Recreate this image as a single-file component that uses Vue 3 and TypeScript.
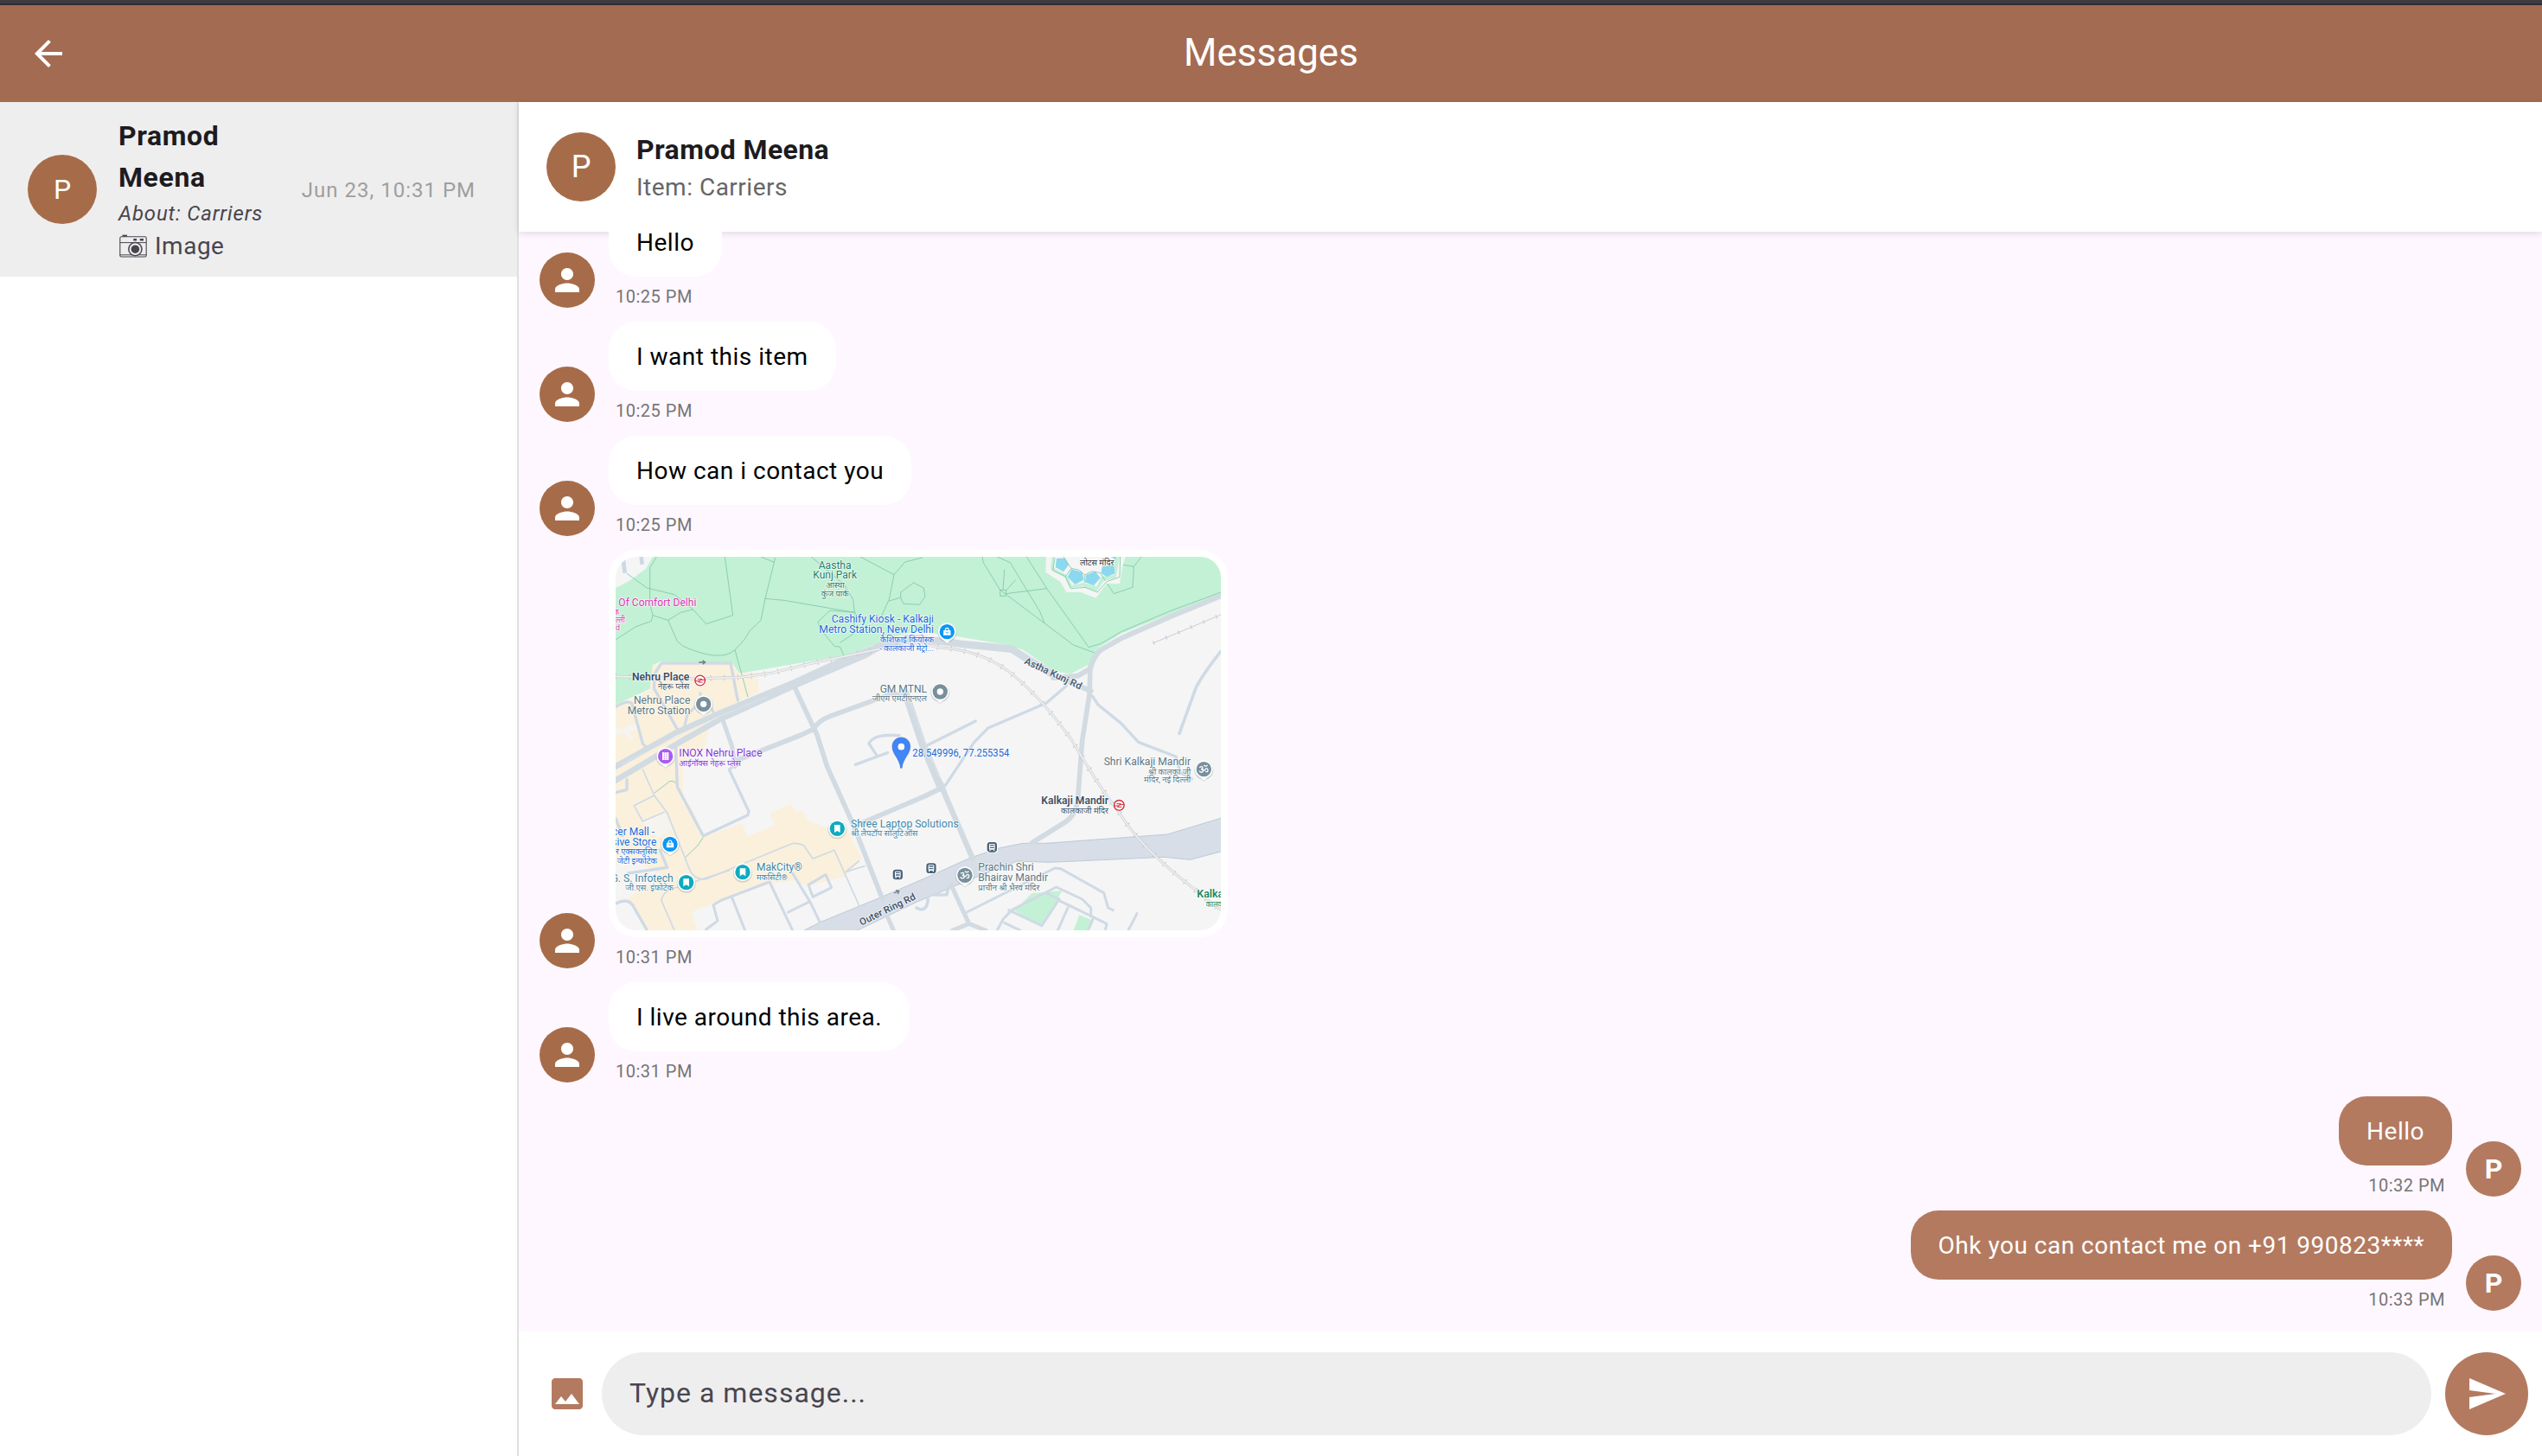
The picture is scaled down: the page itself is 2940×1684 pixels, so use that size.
<script setup lang="ts">
interface Message {
  id: number
  kind: 'text' | 'map'
  text?: string
  time: string
  mine: boolean
}

const messages: Message[] = [
  { id: 1, kind: 'text', text: 'Hello', time: '10:25 PM', mine: false },
  { id: 2, kind: 'text', text: 'I want this item', time: '10:25 PM', mine: false },
  { id: 3, kind: 'text', text: 'How can i contact you', time: '10:25 PM', mine: false },
  { id: 4, kind: 'map', time: '10:31 PM', mine: false },
  { id: 5, kind: 'text', text: 'I live around this area.', time: '10:31 PM', mine: false },
  { id: 6, kind: 'text', text: 'Hello', time: '10:32 PM', mine: true },
  { id: 7, kind: 'text', text: 'Ohk you can contact me on +91 990823****', time: '10:33 PM', mine: true },
]

interface Road { d: string; w: number; c?: string }

const roads: Road[] = [
  { w: 5, d: 'M130 780L170 870L215 930L290 1120Q305 1165 350 1160L640 1040Q665 1030 690 1045L720 1090L795 1060L880 1250' },
  { w: 5, d: 'M170 870L100 905L130 960L205 928' },
  { w: 5, d: 'M240 1338L195 1235Q200 1205 230 1195L430 1130M835 1135L900 1115M840 1130L880 1098' },
  { w: 10, d: 'M36 860L75 850L75 815M36 950L60 1010M80 1140L215 1120L190 1060' },
  { w: 10, d: 'M250 640L170 500L170 450L195 411L435 411L460 540' },
  { w: 9, d: 'M275 630L285 590L330 545M330 545L330 515M365 560L375 580' },
  { w: 10, d: 'M36 562Q90 530 95 560L130 690L150 712' },
  { w: 10, d: 'M36 1245Q75 1225 95 1250L145 1338' },
  { w: 10, d: 'M450 765L430 780L498 925L495 938L340 1010L250 840L245 700' },
  { w: 9, d: 'M350 1335L390 1305L375 1250L400 1235L570 1170L650 1338M440 1225L485 1338' },
  { w: 9, d: 'M635 1275L710 1238L745 1310M650 1140L710 1238M705 1180L765 1145L785 1190L720 1222Z' },
  { w: 10, d: 'M868 763L980 722M940 728L915 690Q930 655 1020 662' },
  { w: 10, d: 'M1600 490L1530 550L1330 635L1280 685L1180 835' },
  { w: 10, d: 'M1690 525L1710 555L1790 620L1850 685L1980 735L1995 790L2035 812' },
  { w: 11, d: 'M2136 370Q2080 440 2050 495L1992 655' },
  { w: 10, d: 'M1285 612L1110 700' },
  { w: 9, d: 'M1255 1275L1560 1122L1580 1124L1730 1208L1745 1260L1762 1268' },
  { w: 9, d: 'M1360 1338L1380 1300L1410 1268L1565 1188L1655 1230L1685 1260L1685 1290' },
  { w: 9, d: 'M1400 1268L1515 1322L1575 1230L1528 1208M1575 1235L1740 1315L1735 1338M1605 1260L1570 1338M1695 1292L1675 1338M1845 1280L1815 1338' },
  { w: 9, d: 'M1385 1312L1440 1338' },
  { w: 11, d: 'M1080 1260Q1115 1280 1120 1230M1140 1215L1185 1215L1190 1190' },
  { w: 15, d: 'M1200 1180L1262 1315L1320 1338M1262 1315L1205 1338' },
  { w: 15, d: 'M975 1280L1000 1338' },
  { w: 15, d: 'M405 600L440 700L450 770' },
  { w: 17, d: 'M440 755L680 660L722 640Q740 610 780 595L1000 515L1035 530' },
  { w: 17, d: 'M655 490L735 660L770 770L860 970L962 1230' },
  { w: 17, d: 'M885 968L1110 872L1165 845' },
  { w: 26, d: 'M1040 510L1100 690L1165 845' },
  { w: 19, d: 'M1165 830L1180 870L1275 1090' },
  { w: 20, d: 'M36 770L240 655L400 583L650 480L850 388L960 350' },
  { w: 20, d: 'M36 818L250 690L400 605L650 492L900 385L960 350' },
  { w: 26, d: 'M940 358Q1010 325 1080 325L1240 345L1410 362L1470 400L1560 455' },
  { w: 18, d: 'M1550 450L1685 508M1555 462L1640 455L1683 430Q1695 385 1720 365L1790 325L1960 250L2136 178' },
  { w: 17, d: 'M1683 420L1680 520L1655 680L1640 880Q1635 935 1600 960L1480 1035' },
]

const rails: string[] = [
  'M36 457L300 465L470 460L580 445L700 415L960 360Q1080 335 1160 357Q1300 365 1400 440Q1510 525 1620 680Q1720 850 1780 925Q1850 1040 2000 1160L2136 1268',
]

const paths: string[] = [
  'M75 100L145 150L240 173L305 225L350 275L443 245L415 42',
  'M305 225L262 235L218 262L165 245L155 205L155 80L178 42M165 245L160 265L105 285L36 330',
  'M218 262L250 335L270 352Q400 410 450 365Q490 325 500 300L540 262L555 187L590 45M540 42L588 62',
  'M450 365L495 528M555 187L620 193L865 235L860 190L830 140L715 42M865 235L780 228L738 268L745 290L795 352L815 355L828 385M815 340L860 310L868 235',
  'M885 42L1002 104L1040 60L1100 45M1002 104L985 190L955 255M985 195L1025 183L1025 165L1070 132L1105 150L1110 180L1090 208L1035 205L1025 183',
  'M1308 42L1312 62L1370 157L1625 348L1698 375M1360 42L1405 62L1508 232L1524 272M1462 42L1532 152L1658 328L1677 356L1720 343L1790 302L1960 230L2136 165',
  'M1370 157H1390V178H1370ZM1380 157L1385 85M1390 160L1424 122M1390 170L1532 152',
  'M170 862L225 820L240 822L250 835M278 1085L320 1045L340 1015',
  'M1735 125L1765 170L1830 148L1834 76L1860 42M1770 65L1834 76',
]

interface Label {
  t: string; x: number; y: number; s: number; w: number; c: string; a?: 'end' | 'middle'; b?: boolean; r?: string
}

const GREEN = '#23806a'
const BLUE = '#1a6be0'
const SLATE = '#5b7683'
const DARK = '#3c4f63'
const TEAL = '#3d87a8'

const labels: Label[] = [
  { t: 'Aastha', x: 740, y: 84, s: 36, w: 114, c: GREEN },
  { t: 'Kunj Park', x: 721, y: 117, s: 36, w: 152, c: GREEN },
  { t: 'आस्था', x: 766, y: 149, s: 28, w: 64, c: GREEN },
  { t: 'कुंज पार्क', x: 749, y: 180, s: 28, w: 96, c: GREEN },
  { t: 'Of Comfort Delhi', x: 46, y: 213, s: 36, w: 270, c: '#e530b8' },
  { t: 'क', x: 30, y: 243, s: 28, w: 18, c: '#e530b8' },
  { t: 'ल्ली', x: 36, y: 270, s: 28, w: 32, c: '#e530b8' },
  { t: 'd', x: 36, y: 297, s: 28, w: 15, c: '#e530b8' },
  { t: 'Cashify Kiosk - Kalkaji', x: 785, y: 270, s: 36, w: 355, c: BLUE },
  { t: 'Metro Station, New Delhi', x: 742, y: 307, s: 36, w: 398, c: BLUE },
  { t: 'कैशिफाई कियोस्क', x: 954, y: 338, s: 28, w: 186, c: BLUE },
  { t: '- कालकाजी मेट्रो...', x: 952, y: 368, s: 28, w: 188, c: BLUE },
  { t: 'लोटस मंदिर', x: 1647, y: 71, s: 28, w: 118, c: '#2e3338' },
  { t: 'Nehru Place', x: 93, y: 470, s: 36, w: 199, c: DARK, b: true },
  { t: 'नेहरू प्लेस', x: 183, y: 500, s: 28, w: 109, c: DARK },
  { t: 'Nehru Place', x: 99, y: 553, s: 36, w: 196, c: SLATE },
  { t: 'Metro Station', x: 77, y: 589, s: 36, w: 218, c: SLATE },
  { t: 'GM MTNL', x: 953, y: 513, s: 36, w: 163, c: SLATE },
  { t: 'जीएम एमटीएनएल', x: 926, y: 543, s: 28, w: 190, c: SLATE },
  { t: 'Astha Kunj Rd', x: 1452, y: 412, s: 34, w: 215, c: '#4d6076', b: true, r: 'rotate(25 1452 412)' },
  { t: 'INOX Nehru Place', x: 256, y: 736, s: 36, w: 289, c: '#8437dc' },
  { t: 'आईनॉक्स नेहरू प्लेस', x: 256, y: 767, s: 28, w: 215, c: '#8437dc' },
  { t: '28.549996, 77.255354', x: 1066, y: 736, s: 36, w: 336, c: '#1967d2' },
  { t: 'Shri Kalkaji Mandir', x: 1730, y: 765, s: 36, w: 301, c: SLATE },
  { t: 'श्री कालका जी', x: 1884, y: 799, s: 28, w: 148, c: SLATE },
  { t: 'मंदिर, नई दिल्ली', x: 1869, y: 826, s: 28, w: 163, c: SLATE },
  { t: 'Kalkaji Mandir', x: 1513, y: 900, s: 36, w: 233, c: DARK, b: true },
  { t: 'कालकाजी मंदिर', x: 1581, y: 933, s: 28, w: 165, c: DARK },
  { t: 'Shree Laptop Solutions', x: 852, y: 980, s: 36, w: 374, c: TEAL },
  { t: 'श्री लैपटॉप सोलुटिओंस', x: 852, y: 1012, s: 28, w: 232, c: TEAL },
  { t: 'cer Mall -', x: 24, y: 1008, s: 36, w: 147, c: BLUE },
  { t: 'sive Store', x: 22, y: 1044, s: 36, w: 156, c: BLUE },
  { t: 'र एक्सक्लूसिव', x: 36, y: 1074, s: 28, w: 144, c: BLUE },
  { t: 'जेटी इन्फोटेक', x: 41, y: 1107, s: 28, w: 139, c: BLUE },
  { t: 'G. S. Infotech', x: 20, y: 1170, s: 36, w: 216, c: TEAL },
  { t: 'जी.एस. इंफोटेक', x: 70, y: 1199, s: 28, w: 167, c: TEAL },
  { t: 'MakCity®', x: 525, y: 1132, s: 36, w: 158, c: TEAL },
  { t: 'मकसिटी®', x: 525, y: 1165, s: 28, w: 107, c: TEAL },
  { t: 'Prachin Shri', x: 1294, y: 1132, s: 36, w: 193, c: SLATE },
  { t: 'Bhairav Mandir', x: 1294, y: 1168, s: 36, w: 242, c: SLATE },
  { t: 'प्राचीन श्री भैरव मंदिर', x: 1294, y: 1199, s: 28, w: 213, c: SLATE },
  { t: 'Outer Ring Rd', x: 889, y: 1322, s: 34, w: 212, c: '#47586d', b: true, r: 'rotate(-26 889 1322)' },
  { t: 'Kalkaji', x: 2053, y: 1223, s: 36, w: 112, c: '#1b8a5e', b: true },
  { t: 'कालका', x: 2084, y: 1258, s: 28, w: 68, c: '#1b8a5e' },
]

interface Pin { x: number; y: number; c: string; g: 'dot' | 'bag' | 'film' | 'mark' | 'om'; tail: boolean }

const pins: Pin[] = [
  { x: 341, y: 553, c: '#78909c', g: 'dot', tail: true },
  { x: 1186, y: 302, c: '#0a97f5', g: 'bag', tail: true },
  { x: 1162, y: 510, c: '#78909c', g: 'dot', tail: true },
  { x: 209, y: 734, c: '#ab5cf0', g: 'film', tail: true },
  { x: 225, y: 1039, c: '#0a97f5', g: 'bag', tail: true },
  { x: 281, y: 1172, c: '#0fabc0', g: 'mark', tail: false },
  { x: 477, y: 1136, c: '#0fabc0', g: 'mark', tail: false },
  { x: 805, y: 985, c: '#0fabc0', g: 'mark', tail: false },
  { x: 1248, y: 1147, c: '#78909c', g: 'om', tail: true },
  { x: 2077, y: 779, c: '#78909c', g: 'om', tail: true },
]

const metros = [{ x: 329, y: 471 }, { x: 1783, y: 904 }]
const stops = [{ x: 1015, y: 1144 }, { x: 1131, y: 1122 }, { x: 1342, y: 1049 }]
</script>

<template>
  <div class="app">
    <div class="edge"></div>
    <header class="bar">
      <svg class="back" viewBox="0 0 24 24"><path d="M20 11H7.83l5.59-5.59L12 4l-8 8 8 8 1.41-1.41L7.83 13H20v-2z" /></svg>
      <h1>Messages</h1>
    </header>

    <div class="body">
      <aside class="side">
        <div class="chat">
          <div class="avatar big small-letter">P</div>
          <div class="info">
            <div class="name">Pramod Meena</div>
            <div class="about">About: Carriers</div>
            <div class="last">
              <svg class="camera" viewBox="0 0 32 27" fill="none" stroke="#49454f">
                <rect x="0.8" y="2.8" width="30.4" height="23.2" rx="1.6" stroke-width="1.1" />
                <path d="M1 9.6H31M1 23.8H31" stroke-width="1" />
                <path d="M3.5 0.6h5.5v2h-5.5z" fill="#49454f" stroke="none" />
                <path d="M16.3 5h3.8v2.6h-3.8zM23.8 5h4.2v2.6h-4.2z" fill="#49454f" stroke="none" />
                <circle cx="18.4" cy="17.2" r="7.6" fill="#eee" stroke-width="1.5" />
                <circle cx="18.4" cy="17.2" r="4.8" fill="#49454f" stroke="none" />
              </svg>
              <span>Image</span>
            </div>
          </div>
          <div class="date">Jun 23, 10:31 PM</div>
        </div>
      </aside>

      <main class="main">
        <div class="head">
          <div class="avatar big">P</div>
          <div class="info">
            <div class="name">Pramod Meena</div>
            <div class="item">Item: Carriers</div>
          </div>
        </div>

        <section class="thread">
          <div v-for="m in messages" :key="m.id" class="row" :class="{ mine: m.mine }">
            <div class="avatar mini">
              <template v-if="m.mine">P</template>
              <svg v-else viewBox="0 0 24 24"><path d="M12 12c2.21 0 4-1.79 4-4s-1.79-4-4-4-4 1.79-4 4 1.79 4 4 4zm0 2c-2.67 0-8 1.34-8 4v2h16v-2c0-2.66-5.33-4-8-4z" /></svg>
            </div>
            <div class="stack">
              <div v-if="m.kind === 'text'" class="bubble">{{ m.text }}</div>
              <div v-else class="bubble picture">
                <svg class="map" viewBox="36 42 2100 1296">
                  <rect x="36" y="42" width="2100" height="1296" fill="#f5f5f5" />
                  <path fill="#c3f1d5" d="M36 150Q90 125 120 98L140 85L165 42H2136V170L1960 240L1790 308L1715 355L1680 415L1615 448L1560 440L1450 365L1410 350L1220 318L1080 300L1000 320L940 345L830 385L650 415L465 447L440 410L190 405L165 420L155 500L36 555Z" />
                  <path fill="#faf0dc" d="M165 415L440 410L465 445L528 445L535 510L400 575L350 600L360 640L345 700L335 720L300 735L270 770V895L300 910L340 1015L475 965L492 1012L587 975L572 930L645 900L660 928L685 922L700 955L775 985L830 965L892 1090L835 1150L700 1185L655 1165L500 1190L385 1240L300 1275L320 1338H145L90 1245L36 1160V565L155 505Z" />
                  <path fill="#f5f5f5" d="M36 630L55 645L75 630L110 622L115 640L85 650L95 672L80 675L65 650L36 660ZM36 1105L80 1085L210 1150L80 1225L36 1225ZM130 960L205 930L235 990L180 1015Z" opacity="0.85" />
                  <path fill="#c3f1d5" d="M1420 1270L1480 1210L1585 1200L1560 1250L1515 1325ZM1645 1285L1695 1305L1680 1338H1625Z" />
                  <path d="M62 48L68 98M125 42L128 68" stroke="#ccd8e3" stroke-width="14" />

                  <g fill="none" stroke="#7cc4a9" stroke-width="2.4">
                    <path v-for="(d, i) in paths" :key="i" :d="d" />
                  </g>

                  <path fill="#f5f5f5" d="M1530 42L1528 95L1580 130L1600 165L1650 165L1702 185L1740 135L1785 135L1795 75L1805 42Z" />
                  <path fill="#c3f1d5" d="M1550 42L1545 85L1595 115L1612 150L1655 145L1705 162L1730 125L1772 115L1785 42Z" />
                  <path fill="#f5f5f5" d="M1558 42L1556 80L1600 105L1620 140L1660 132L1705 145L1722 110L1765 105V42Z" />
                  <path fill="#8cd8ee" d="M1566 47H1596L1608 70L1590 94L1562 78ZM1618 85L1655 95L1660 122L1630 138L1604 112ZM1668 105L1700 93L1718 115L1695 142L1665 130ZM1725 75L1765 70L1768 100L1740 112L1720 98ZM1755 42H1772V52Z" />
                  <path fill="none" stroke="#7cc4a9" stroke-width="2.4" d="M1560 45L1553 90L1597 110L1615 152L1665 148L1708 165L1740 128L1785 112L1787 42M1597 110L1617 82L1645 88L1663 105L1690 92L1718 98L1735 125M1663 105V132M1590 42L1617 82" />

                  <path fill="#d7dee7" stroke="#bccad6" stroke-width="3" d="M690 1338L750 1308L960 1222L1110 1157L1270 1085L1370 1052L1450 1036L1530 1036L1950 1005L2146 946V1062L2030 1093L1940 1084L1540 1102L1430 1098L1300 1148L1080 1240L850 1350L690 1350Z" />

                  <g fill="none" stroke-linecap="round" stroke-linejoin="round">
                    <path v-for="(r, i) in roads" :key="i" :d="r.d" :stroke-width="r.w" :stroke="r.w < 15 ? '#cfdae5' : '#d2dbe2'" />
                  </g>
                  <path fill="none" stroke="#e3e8ee" stroke-width="2" d="M1050 520L1110 690L1160 810M60 760L240 672L400 594L560 528" />

                  <g v-for="(d, i) in rails" :key="i" fill="none">
                    <path :d="d" stroke="#c6c8cd" stroke-width="20" stroke-dasharray="3 44" />
                    <path :d="d" stroke="#cccdd2" stroke-width="9" />
                    <path :d="d" stroke="#eef0f1" stroke-width="5" />
                  </g>
                  <path fill="none" stroke="#cbccd0" stroke-width="3" d="M1900 342L2136 243" />
                  <path fill="none" stroke="#c6c8cd" stroke-width="14" stroke-dasharray="3 44" d="M1902 341L2136 243" />
                  <path fill="none" stroke="#6f7c87" stroke-width="4" d="M325 408H346M338 401L347 408L338 415M1002 1209L1018 1202M1008 1199L1019 1202L1015 1212" />

                  <g v-for="(l, i) in labels" :key="'l' + i" :transform="l.r">
                    <text
                      :x="l.x" :y="l.y" :font-size="l.s" :textLength="l.w" lengthAdjust="spacingAndGlyphs"
                      :fill="l.c" :font-weight="l.b ? 600 : 400"
                    >{{ l.t }}</text>
                  </g>

                  <g v-for="(p, i) in pins" :key="'p' + i" :transform="`translate(${p.x} ${p.y})`">
                    <circle cy="3" r="33" fill="#8a949b" opacity="0.35" />
                    <path v-if="p.tail" d="M-22 22L0 41L22 22Z" fill="#fff" stroke="#b9c0c4" stroke-width="2" />
                    <circle r="31" fill="#fff" />
                    <circle r="26" :fill="p.c" />
                    <circle v-if="p.g === 'dot'" r="11" fill="#fff" />
                    <path v-else-if="p.g === 'mark'" d="M-10 -13H10V14L0 8L-10 14Z" fill="#fff" />
                    <g v-else-if="p.g === 'bag'">
                      <path d="M-12 -5H12L13 12H-13Z" fill="#fff" />
                      <path d="M-6 -4Q-6 -13 0 -13T6 -4" fill="none" stroke="#fff" stroke-width="3.5" />
                      <path d="M-5 1Q0 7 5 1" fill="none" :stroke="p.c" stroke-width="2.5" />
                    </g>
                    <g v-else-if="p.g === 'film'">
                      <rect x="-11" y="-14" width="22" height="27" fill="#fff" />
                      <path d="M-4 -14V13M4 -14V13" :stroke="p.c" stroke-width="2.5" stroke-dasharray="4 3" />
                    </g>
                    <g v-else fill="none" stroke="#fff" stroke-width="4" stroke-linecap="round">
                      <path d="M-14 -7Q-5 -12 -4 -5Q-4 0 -10 0Q-1 1 -3 8Q-8 14 -15 7M-3 2Q4 6 6 -1Q12 -6 14 2Q15 10 7 9M1 -13Q6 -8 12 -13" />
                    </g>
                  </g>

                  <g v-for="(s, i) in metros" :key="'m' + i" :transform="`translate(${s.x} ${s.y})`">
                    <circle r="21" fill="#fff" />
                    <circle r="17.5" fill="#fff" stroke="#cf2a38" stroke-width="4" />
                    <path d="M-17 2H-2L6 -5H-9M17 -2H2L-6 6H9" fill="none" stroke="#cf2a38" stroke-width="3" />
                  </g>

                  <g v-for="(s, i) in stops" :key="'s' + i" :transform="`translate(${s.x} ${s.y})`">
                    <rect x="-20" y="-20" width="40" height="40" rx="10" fill="#fff" />
                    <rect x="-17" y="-17" width="34" height="35" rx="10" fill="#4a637a" />
                    <rect x="-10" y="-11" width="20" height="20" rx="3" fill="#fff" />
                    <path d="M-7 -6H7M-7 2H7" stroke="#4a637a" stroke-width="4" />
                    <path d="M-7 9V13M7 9V13" stroke="#fff" stroke-width="4" />
                  </g>

                  <path fill="#4285f4" stroke="#2f6fe0" stroke-width="2" d="M1027 669C1009 669 996 683 996 700C996 728 1021 740 1025 775H1029C1033 740 1058 728 1058 700C1058 683 1045 669 1027 669Z" />
                  <circle cx="1027" cy="701" r="11.5" fill="#fff" />
                </svg>
              </div>
              <div class="time">{{ m.time }}</div>
            </div>
          </div>
        </section>

        <footer class="composer">
          <svg class="pic" viewBox="0 0 24 24"><path d="M21 19V5c0-1.1-.9-2-2-2H5c-1.1 0-2 .9-2 2v14c0 1.1.9 2 2 2h14c1.1 0 2-.9 2-2zM8.5 13.5l2.5 3.01L14.5 12l4.5 6H5l3.5-4.5z" /></svg>
          <div class="field">Type a message...</div>
          <div class="send"><svg viewBox="0 0 24 24"><path d="M2.01 21L23 12 2.01 3 2 10l15 2-15 2z" /></svg></div>
        </footer>
      </main>
    </div>
  </div>
</template>

<style>
html, body { margin: 0; overflow: hidden; }
</style>

<style scoped>
.app {
  width: 2940px;
  height: 1684px;
  display: flex;
  flex-direction: column;
  font-family: Roboto, "Noto Sans", sans-serif;
  color: #1d1b20;
  background: #fff;
  overflow: hidden;
}
.app * { box-sizing: border-box; }
.edge { height: 6px; flex: none; background: #3c3b40; border-bottom: 2px solid #2f2b31; }
.bar {
  height: 112px;
  flex: none;
  display: grid;
  grid-template-columns: 80px 1fr 80px;
  align-items: center;
  background: #a36b51;
}
.back { width: 48px; height: 48px; fill: #fff; justify-self: end; }
h1 {
  margin: 0;
  text-align: center;
  font-size: 44px;
  font-weight: 400;
  line-height: 56px;
  color: #fff;
  padding-bottom: 2px;
}
.body { flex: 1; display: flex; min-height: 0; }
.side { width: 600px; flex: none; border-right: 2px solid #e0e0e0; }
.chat {
  height: 202px;
  display: flex;
  align-items: center;
  padding: 0 48px 0 32px;
  background: #eee;
}
.avatar {
  flex: none;
  display: flex;
  align-items: center;
  justify-content: center;
  border-radius: 50%;
  background: #a66c49;
  color: #fff;
}
.big { width: 80px; height: 80px; font-size: 36px; margin-right: 24px; }
.small-letter { font-size: 32px; margin-right: 25px; }
.name {
  font-size: 32px;
  line-height: 48px;
  font-weight: 700;
  letter-spacing: 0.4px;
}
.chat .info { width: 176px; margin-right: 31px; }
.chat .name { height: 96px; margin-top: -1px; letter-spacing: 0.6px; }
.about {
  height: 35px;
  padding-top: 1px;
  font-size: 24px;
  line-height: 34px;
  font-style: italic;
  letter-spacing: 0.8px;
  color: #49454f;
  white-space: nowrap;
}
.last { height: 40px; display: flex; align-items: center; gap: 9px; font-size: 28px; letter-spacing: 0.5px; color: #49454f; }
.camera { width: 32px; height: 27px; margin-left: 1px; }
.date { margin-left: auto; padding-top: 1px; font-size: 24px; letter-spacing: 1px; color: #9e9e9e; white-space: nowrap; }

.main { flex: 1; min-width: 0; display: flex; flex-direction: column; background: #fef7ff; }
.head {
  height: 150px;
  flex: none;
  display: flex;
  align-items: center;
  padding: 0 32px;
  background: #fff;
  box-shadow: 0 2px 8px rgba(0, 0, 0, 0.12);
}
.item { font-size: 28px; line-height: 40px; letter-spacing: 0.5px; color: #666; }
.thread {
  flex: 1;
  min-height: 0;
  overflow: hidden;
  display: flex;
  flex-direction: column;
  justify-content: flex-end;
  padding: 0 24px 8px;
}
.row { flex: none; display: flex; align-items: flex-end; gap: 16px; padding-bottom: 16px; }
.row.mine { flex-direction: row-reverse; }
.mini { width: 64px; height: 64px; font-size: 32px; font-weight: 700; }
.mini svg { width: 42px; height: 42px; fill: #fff; }
.mine .mini { background: #b37a60; }
.stack { display: flex; flex-direction: column; align-items: flex-start; }
.mine .stack { align-items: flex-end; }
.bubble {
  padding: 21px 32px 19px;
  border-radius: 32px;
  background: #fff;
  color: #000;
  font-size: 28px;
  line-height: 40px;
  letter-spacing: 0.5px;
}
.mine .bubble { background: #b37a60; color: #fff; }
.bubble.picture { padding: 8px; }
.map { display: block; width: 700px; height: 432px; border-radius: 24px; }
.map text {
  letter-spacing: 0;
  font-family: Roboto, "Noto Sans", "Noto Sans Devanagari", sans-serif;
  paint-order: stroke;
  stroke: rgba(255, 255, 255, 0.75);
  stroke-width: 5px;
  stroke-linejoin: round;
}
.time { height: 36px; padding: 9px 8px 0; font-size: 20px; line-height: 28px; letter-spacing: 0.5px; color: #757575; }

.composer {
  height: 144px;
  flex: none;
  display: flex;
  align-items: center;
  gap: 16px;
  padding: 0 16px 0 32px;
  background: #fff;
}
.pic { width: 48px; height: 48px; fill: #b37a60; }
.field {
  flex: 1;
  height: 96px;
  border-radius: 48px;
  padding: 0 32px;
  background: #eee;
  color: #49454f;
  font-size: 32px;
  line-height: 94px;
  letter-spacing: 1px;
}
.send {
  width: 96px;
  height: 96px;
  border-radius: 50%;
  background: #b37a60;
  display: flex;
  align-items: center;
  justify-content: center;
}
.send svg { width: 48px; height: 48px; fill: #fff; }
</style>
